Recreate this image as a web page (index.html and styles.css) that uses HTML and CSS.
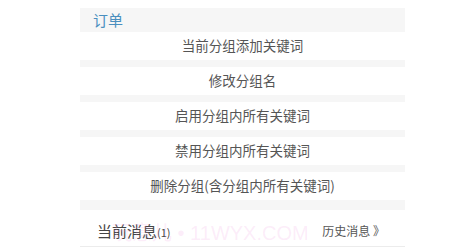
FILE: index.html
```html
<!DOCTYPE html>
<html lang="zh">
<head>
<meta charset="utf-8">
<link rel="stylesheet" href="styles.css">
</head>
<body>
<div class="panel">
  <div class="group-head">订单</div>
  <div class="action">当前分组添加关键词</div>
  <div class="action">修改分组名</div>
  <div class="action">启用分组内所有关键词</div>
  <div class="action">禁用分组内所有关键词</div>
  <div class="action">删除分组(含分组内所有关键词)</div>
  <div class="footer">
    <span class="current">当前消息<small>(1)</small></span>
    <span class="history">历史消息 》</span>
    <span class="watermark">玩意儿 • 11WYX.COM</span>
  </div>
</div>
</body>
</html>
```
FILE: styles.css
```css
html, body {
  margin: 0;
  padding: 0;
  background: #ffffff;
}
body {
  font-family: "Noto Sans CJK SC", "Noto Sans", sans-serif;
  padding-top: 8px;
}
.panel {
  margin-left: 80px;
  width: 325px;
  background: #f6f6f6;
  display: flex;
  flex-direction: column;
  gap: 7px;
}
.group-head {
  height: 24px;
  line-height: 24px;
  padding-left: 13px;
  font-size: 15px;
  color: #4a8fbf;
  margin-bottom: -7px;
}
.action {
  height: 28px;
  line-height: 26px;
  background: #ffffff;
  text-align: center;
  font-size: 13.5px;
  color: #555555;
}
.footer {
  position: relative;
  margin-top: 3px;
  height: 37px;
  box-sizing: border-box;
  padding: 4px 20px 0 17px;
  background: #ffffff;
  border-bottom: 1px solid #ececec;
  display: flex;
  align-items: center;
  justify-content: space-between;
}
.current {
  font-size: 15px;
  color: #444444;
}
.current small {
  font-size: 11px;
}
.history {
  font-size: 12px;
  color: #555555;
}
.watermark {
  position: absolute;
  left: 32px;
  top: 7px;
  font-size: 20px;
  color: rgba(240, 160, 225, 0.2);
  white-space: nowrap;
  font-family: "Liberation Sans", "Noto Sans CJK SC", sans-serif;
  pointer-events: none;
}
```
